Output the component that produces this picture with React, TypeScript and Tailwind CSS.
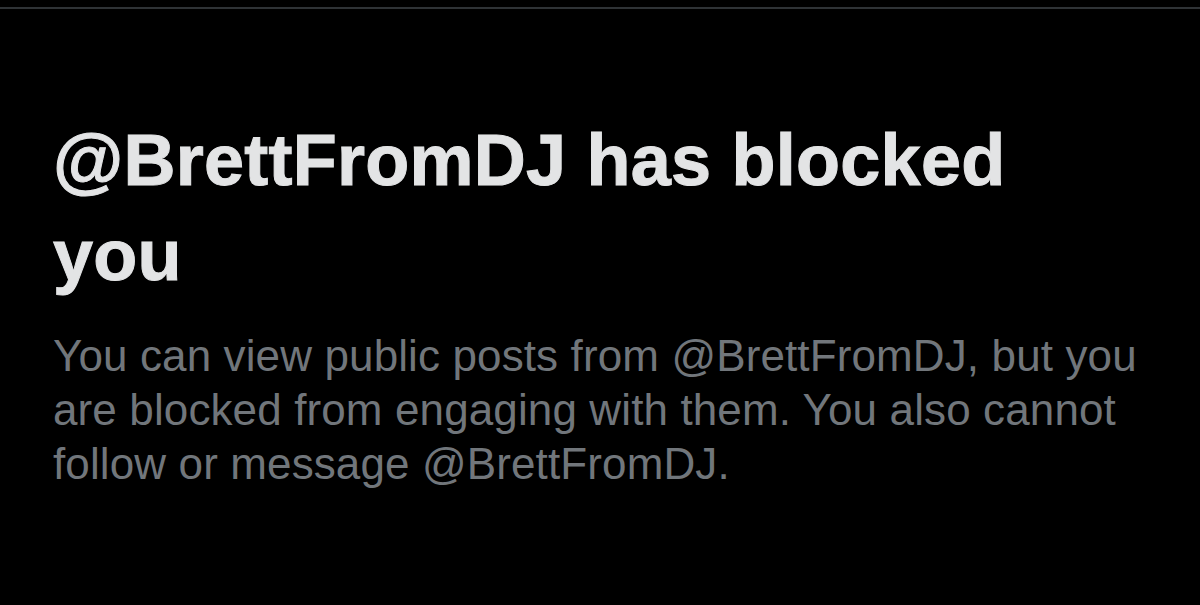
import React from 'react';

const App = () => (
  <div className="w-[1200px] h-[605px] bg-black overflow-hidden font-['Liberation_Sans',Arial,sans-serif]">
    <div className="pt-[7px]">
      <div className="h-[2px] bg-[#2f3336]" />
    </div>
    <div className="pl-[53px] pr-[40px] pt-[104px]">
      <h1 className="max-w-[1040px] text-[72px] leading-[95px] font-bold tracking-[0.25px] text-[#e3e4e5] [-webkit-text-stroke:1px_#e3e4e5]">
        @BrettFromDJ has blocked you
      </h1>
      <p className="mt-[26px] text-[44px] leading-[54px] tracking-[0.12px] text-[#71767b]">
        You can view public posts from @BrettFromDJ, but you are blocked from engaging with them. You also cannot
        follow or message @BrettFromDJ.
      </p>
    </div>
  </div>
);

export default App;
